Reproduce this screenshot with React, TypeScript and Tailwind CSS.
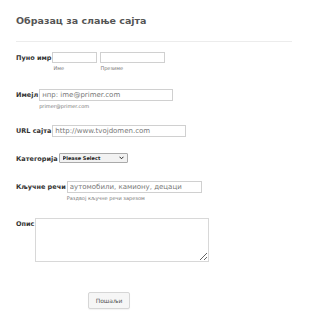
import { useState } from 'react'

const font = "font-['DejaVu_Sans',Verdana,sans-serif]"

const Label = ({ text }: { text: string }) => (
  <span className="text-[6.5px] font-bold text-[#333] pt-[2px] pr-[1px] whitespace-nowrap leading-[8px]">
    {text}
  </span>
)

const Sub = ({ text, className = '' }: { text: string; className?: string }) => (
  <span className={`text-[5px] text-[#777] leading-[6px] mt-[2px] ${className}`}>{text}</span>
)

const inputCls =
  'border border-[#d0d0d0] bg-white outline-none px-[2px] text-[7px] text-[#555] placeholder:text-[#777] leading-none'

const App = () => {
  const [first, setFirst] = useState('')
  const [last, setLast] = useState('')

  return (
    <div className={`w-[310px] h-[320px] bg-white pl-[16px] pr-[18px] pt-[15px] ${font}`}>
      {/* HEADER */}
      <h1 className="text-[9.5px] font-bold text-[#555] leading-[12px]">Образац за слање сајта</h1>
      <div className="mt-[14px] h-px bg-[#ececec]"></div>

      {/* FULL NAME */}
      <div className="mt-[10px] h-[37px] flex items-start">
        <Label text="Пуно имр" />
        <div className="flex flex-col">
          <input value={first} onChange={(e) => setFirst(e.target.value)} className={`${inputCls} w-[45px] h-[11px]`} />
          <Sub text="Име" className="pl-[1px]" />
        </div>
        <div className="flex flex-col ml-[3px]">
          <input value={last} onChange={(e) => setLast(e.target.value)} className={`${inputCls} w-[65px] h-[11px]`} />
          <Sub text="Презиме" />
        </div>
      </div>

      {/* EMAIL */}
      <div className="h-[36px] flex items-start">
        <Label text="Имејл" />
        <div className="flex flex-col">
          <input placeholder="нпр: ime@primer.com" className={`${inputCls} w-[134px] h-[12px]`} />
          <Sub text="primer@primer.com" />
        </div>
      </div>

      {/* URL */}
      <div className="h-[28px] flex items-start">
        <Label text="URL сајта" />
        <input placeholder="http://www.tvojdomen.com" className={`${inputCls} w-[134px] h-[12px]`} />
      </div>

      {/* CATEGORY */}
      <div className="h-[28px] flex items-start">
        <Label text="Категорија" />
        <div className="relative leading-none">
          <select className="block appearance-none w-[69px] h-[10px] border border-[#aaa] bg-[#f2f2f2] text-[5px] font-bold text-[#222] leading-none py-0 pl-[3px] rounded-[1px] outline-none">
            <option>Please Select</option>
          </select>
          <svg className="absolute right-[4px] top-[3px] w-[5px] h-[4px] pointer-events-none" viewBox="0 0 10 8">
            <path d="M1 1.5 L5 5.5 L9 1.5" fill="none" stroke="#222" strokeWidth="2" />
          </svg>
        </div>
      </div>

      {/* KEYWORDS */}
      <div className="h-[37px] flex items-start">
        <Label text="Кључне речи" />
        <div className="flex flex-col">
          <input placeholder="аутомобили, камиону, децаци" className={`${inputCls} w-[135px] h-[12px]`} />
          <Sub text="Раздвој кључне речи зарезом" />
        </div>
      </div>

      {/* DESCRIPTION */}
      <div className="h-[68px] flex items-start">
        <Label text="Опис" />
        <textarea className="w-[174px] h-[44px] border border-[#d8d8d8] bg-white outline-none text-[7px]"></textarea>
      </div>

      {/* SUBMIT */}
      <div className="pl-[72px]">
        <button className="w-[42px] h-[17px] border border-[#d6d6d6] rounded-[2px] bg-[#f6f6f6] text-[6px] text-[#555] shadow-[0_1px_1px_rgba(0,0,0,0.05)]">
          Пошаљи
        </button>
      </div>
    </div>
  )
}

export default App
